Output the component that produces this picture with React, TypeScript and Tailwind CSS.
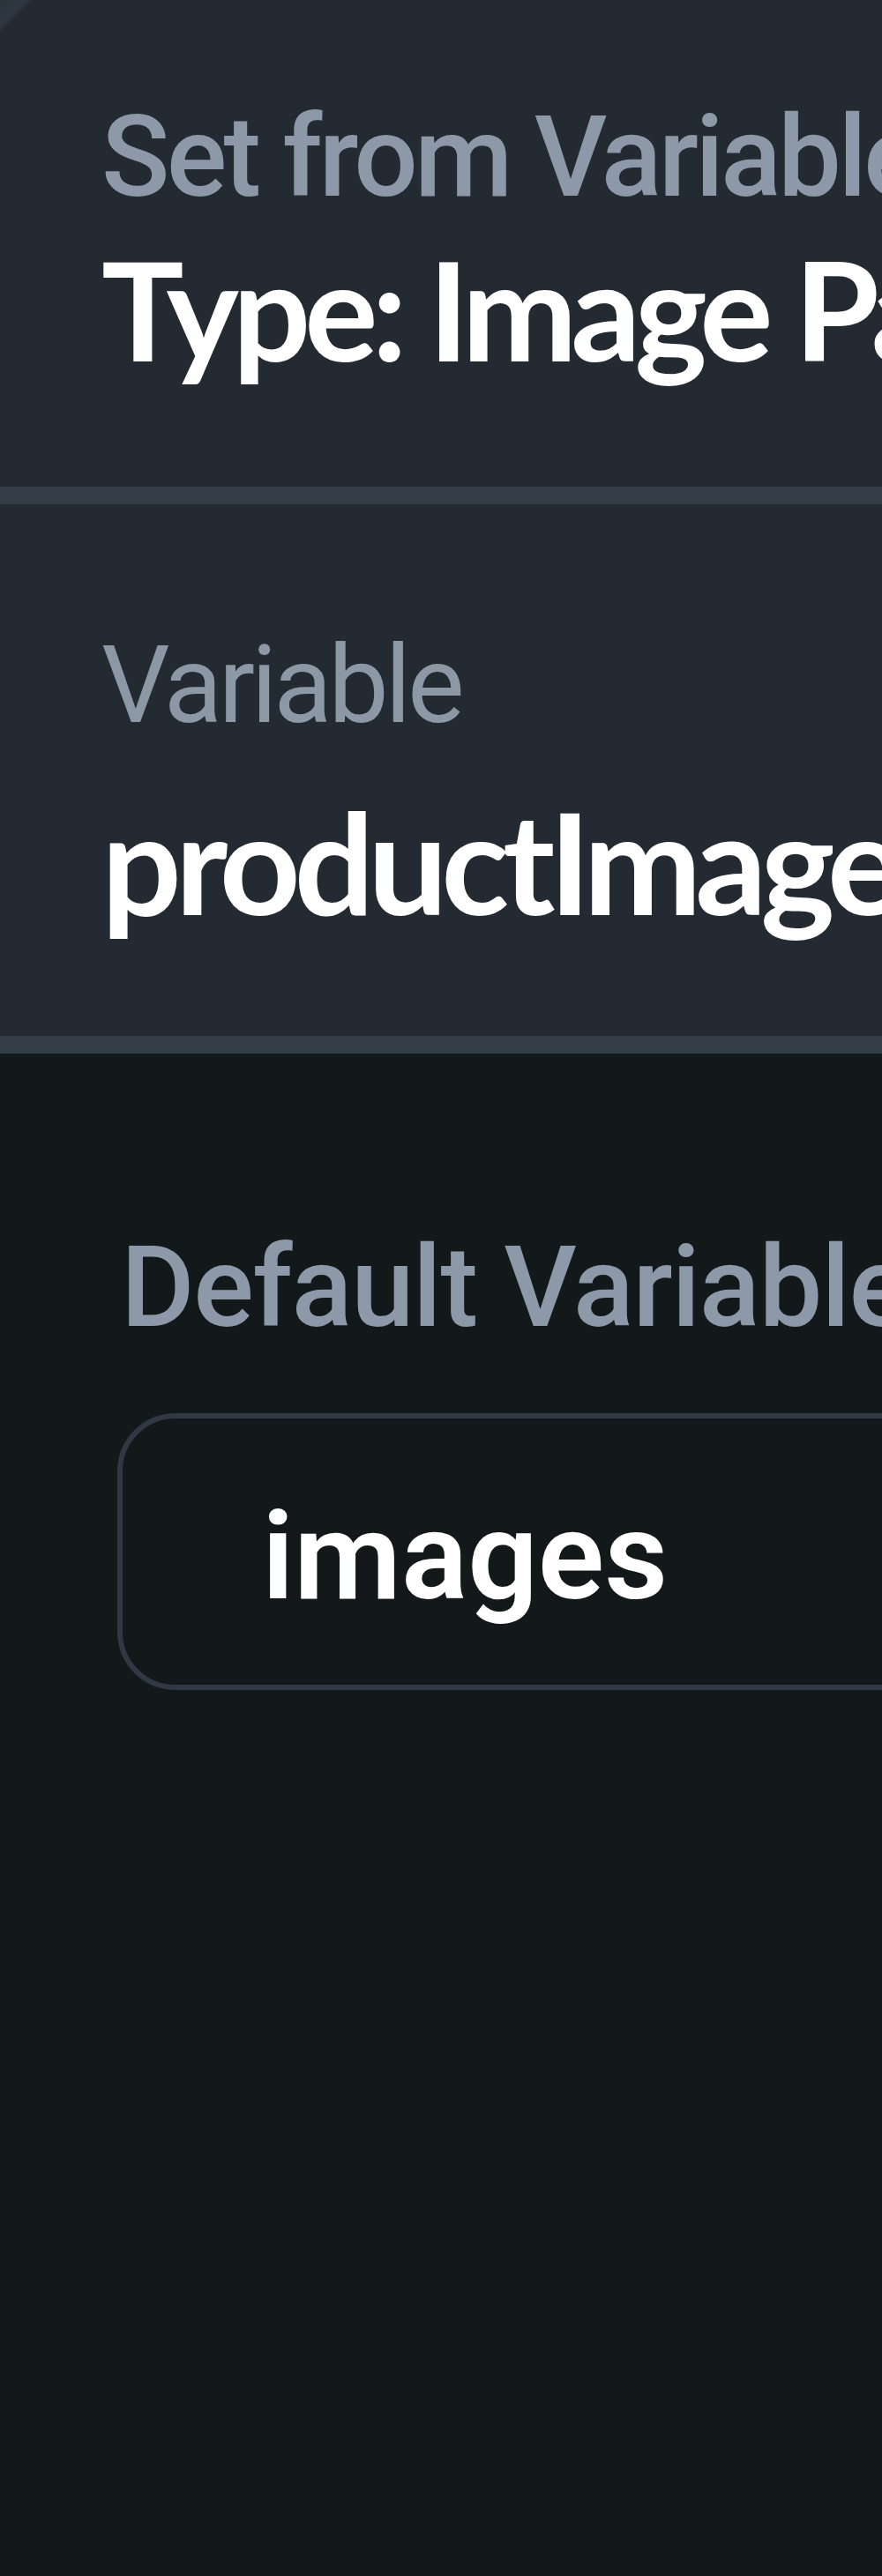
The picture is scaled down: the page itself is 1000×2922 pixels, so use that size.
export default function App() {
  return (
    <div className="min-h-screen w-full overflow-hidden bg-[#13181b] font-['Roboto',sans-serif]">
      <section className="bg-[#232a32] bg-[linear-gradient(135deg,#29313a_0px,#2f3842_17px,#2f3842_21px,#232a32_27px)] border-b-[20px] border-[#333d47] pl-[115px] pt-[103px] h-[572px] whitespace-nowrap">
        <p className="text-[128px] leading-[150px] font-medium tracking-[-0.03em] text-[#8d99a8]">Set from Variable</p>
        <p className="mt-[7px] font-['Lato',sans-serif] text-[156px] leading-[180px] font-bold tracking-[-0.045em] text-white">Type: Image Path</p>
      </section>

      <section className="bg-[#232a32] border-b-[20px] border-[#333d47] pl-[115px] pt-[131px] h-[623px] whitespace-nowrap">
        <p className="text-[122px] leading-[150px] font-normal tracking-[-0.035em] text-[#8c98a6]">Variable</p>
        <p className="mt-[28px] font-['Lato',sans-serif] text-[160px] leading-[190px] font-bold tracking-[-0.045em] text-white">productImages</p>
      </section>

      <section className="pl-[133px] pt-[190px] whitespace-nowrap">
        <p className="pl-[4px] text-[128px] leading-[150px] font-medium tracking-[-0.01em] text-[#8d99a8]">Default Variable</p>
        <div className="mt-[68px] w-[1200px] h-[314px] rounded-[66px] border-[6px] border-[#2f3843] flex items-center pl-[158px]">
          <span className="pt-[10px] text-[140px] leading-[160px] font-semibold text-white">images</span>
        </div>
      </section>
    </div>
  );
}
